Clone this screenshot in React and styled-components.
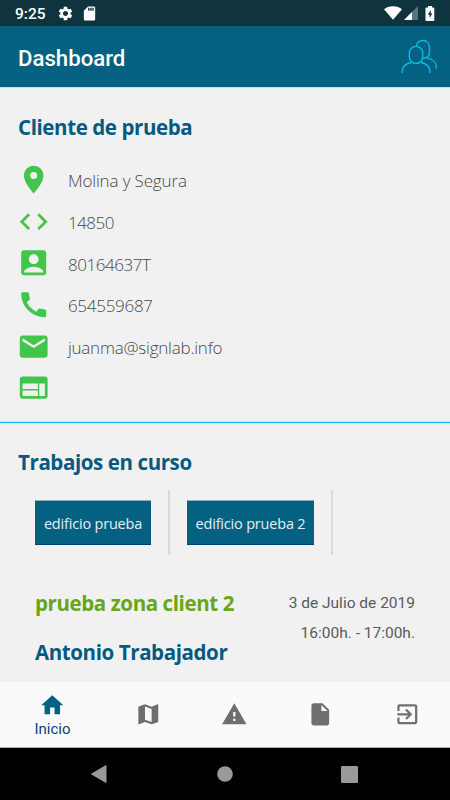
import React from "react";
import styled, { createGlobalStyle } from "styled-components";
import {
  MdSettings,
  MdSdCard,
  MdPlace,
  MdCode,
  MdAccountBox,
  MdCall,
  MdEmail,
  MdWeb,
  MdHome,
  MdMap,
  MdWarning,
  MdInsertDriveFile,
  MdExitToApp,
} from "react-icons/md";

const GlobalStyle = createGlobalStyle`
  :root {
    --clr-primary: #056182;
    --clr-title: #045a80;
    --clr-accent: #04bcee;
    --clr-green: #42c54b;
    --clr-bg: #f1f1f1;
  }
  * {
    box-sizing: border-box;
  }
  body {
    margin: 0;
    font-family: "Open Sans", "Noto Sans", sans-serif;
  }
  h1, h2, h3, p, ul {
    margin: 0;
    padding: 0;
  }
  svg {
    display: block;
    flex: none;
  }
`;

const Screen = styled.div`
  display: flex;
  flex-direction: column;
  width: 450px;
  height: 800px;
  overflow: hidden;
  background: var(--clr-bg);
`;

const StatusBar = styled.div`
  display: flex;
  align-items: center;
  justify-content: space-between;
  flex: none;
  height: 26px;
  padding: 0 15px;
  background: #10343f;
  color: #fff;
  font: 500 15.5px/26px Roboto, sans-serif;
`;

const StatusGroup = styled.div`
  display: flex;
  align-items: center;
  gap: ${(p) => p.$gap}px;
`;

const Time = styled.span`
  margin-right: 4px;
  padding-top: 1px;
`;

const AppBar = styled.header`
  display: flex;
  align-items: center;
  justify-content: space-between;
  flex: none;
  height: 62px;
  padding: 0 13px 0 18px;
  background: var(--clr-primary);
  border-bottom: 1px solid #d5dcdf;
  h1 {
    color: #fff;
    font: 500 22.2px/30px Roboto, sans-serif;
    padding-top: 3px;
  }
`;

const Content = styled.main`
  flex: 1;
  min-height: 0;
  overflow: hidden;
`;

const Client = styled.section`
  height: 335px;
  padding: 26px 18px 0;
  border-bottom: 1px solid var(--clr-accent);
  box-shadow: inset 0 -1px 0 #dfe3e4;
`;

const Title = styled.h2`
  color: ${(p) => p.$color || "var(--clr-title)"};
  font-size: 20.5px;
  font-weight: 700;
  line-height: 26px;
  letter-spacing: ${(p) => p.$spacing}px;
  white-space: nowrap;
`;

const InfoList = styled.ul`
  margin-top: 19px;
  list-style: none;
`;

const InfoRow = styled.li`
  display: flex;
  align-items: center;
  gap: 17.3px;
  height: 41.67px;
  margin-left: -0.8px;
  color: var(--clr-green);
  span {
    padding-top: 3px;
    color: #484848;
    font-size: 17px;
    font-weight: 300;
    line-height: 24px;
    letter-spacing: ${(p) => p.$spacing || 0}px;
  }
`;

const Jobs = styled.section`
  padding: 26px 18px 0;
`;

const Buildings = styled.div`
  display: flex;
  margin-top: 15px;
`;

const BuildingItem = styled.div`
  display: flex;
  align-items: center;
  height: 65px;
  padding: 0 17px;
  border-right: 2px solid #dadada;
`;

const BuildingButton = styled.button`
  width: ${(p) => p.$width}px;
  height: 45px;
  padding: 3px 0 0;
  border: 0;
  border-top: 1px solid #8aa9b5;
  border-bottom: 1px solid #003f70;
  background: var(--clr-primary);
  color: #e4eff3;
  font: 400 14.5px/20px "Open Sans", sans-serif;
  letter-spacing: -0.19px;
  white-space: nowrap;
`;

const Job = styled.article`
  display: flex;
  justify-content: space-between;
  padding: 35px 17px 0 17px;
`;

const JobInfo = styled.div`
  display: flex;
  flex-direction: column;
  gap: 23px;
`;

const JobDate = styled.div`
  margin-top: -2px;
  color: #5a5a5a;
  text-align: right;
  font: 400 15.5px/30px Roboto, sans-serif;
`;

const TabBar = styled.nav`
  display: grid;
  grid-template-columns: 105px 86px 86px 87px 86px;
  flex: none;
  height: 66px;
  background: #fafafa;
  border-bottom: 1px solid #a5a5a5;
`;

const Tab = styled.a`
  display: flex;
  flex-direction: column;
  align-items: center;
  padding-top: ${(p) => (p.$active ? 10 : 19)}px;
  color: ${(p) => (p.$active ? "var(--clr-primary)" : "#6f6f6f")};
  span {
    color: #0b3f80;
    font: 400 15px/20px Roboto, sans-serif;
  }
`;

const SystemBar = styled.div`
  display: flex;
  align-items: center;
  justify-content: space-between;
  flex: none;
  height: 52px;
  padding: 0 92px 0 90px;
  background: #000;
`;

const ClientsIcon = () => (
  <svg width="36" height="36" viewBox="0 0 36 36" fill="none" stroke="#06bfe8" strokeWidth="1.35">
    <rect x="8.3" y="7.3" width="13.5" height="17.2" rx="6.75" />
    <path d="M1.3 34v-1.200c0-5 3.600-8.300 9-9.300" />
    <path d="M28.900 34v-1.200c0-5-3.600-8.300-9-9.300" />
    <path d="M15.2 7.1C16.2 3.4 18.7 1.5 21.8 1.5c4 0 6.700 2.800 6.700 6.700v4.900c0 4.100-2.600 6.300-6.400 6.300" />
    <path d="M26.200 19.200c5.500.7 9.100 4.200 9.100 8.900v1.600" />
  </svg>
);

const WifiIcon = () => (
  <svg width="18" height="14" viewBox="0 0 18 14" fill="#fff">
    <path d="M0 3.2C2.4 1.2 5.5.2 9 .2s6.600 1 9 3L9 13.800z" />
  </svg>
);

const SignalIcon = () => (
  <svg width="14" height="14" viewBox="0 0 14 14">
    <path d="M14 0v14H0z" fill="#5a747c" />
    <path d="M8 6v8H0z" fill="#fff" />
  </svg>
);

const BatteryWrap = styled.div`
  margin-left: 5px;
`;

const BatteryIcon = () => (
  <BatteryWrap>
    <svg width="10" height="15" viewBox="0 0 10 15">
      <path
        d="M3 0h4v1.600h1.300c.6 0 1 .4 1 1V14c0 .6-.4 1-1 1H1.500c-.6 0-1-.4-1-1V2.600c0-.6.4-1 1-1H3z"
        fill="#fff"
      />
      <path d="M5.800 4L2.800 8.800h1.800V12l2.800-4.600H5.800z" fill="#10343f" />
    </svg>
  </BatteryWrap>
);

const clientInfo = [
  { icon: MdPlace, text: "Molina y Segura", spacing: -0.15 },
  { icon: MdCode, text: "14850", spacing: -0.5 },
  { icon: MdAccountBox, text: "80164637T", spacing: -0.45 },
  { icon: MdCall, text: "654559687", spacing: -0.27 },
  { icon: MdEmail, text: "juanma@signlab.info", spacing: -0.22 },
  { icon: MdWeb, text: "" },
];

const tabs = [
  { icon: MdHome, label: "Inicio", active: true },
  { icon: MdMap },
  { icon: MdWarning },
  { icon: MdInsertDriveFile },
  { icon: MdExitToApp },
];

export default function App() {
  return (
    <Screen>
      <GlobalStyle />
      <StatusBar>
        <StatusGroup $gap={7}>
          <Time>9:25</Time>
          <MdSettings size={17} />
          <MdSdCard size={17} />
        </StatusGroup>
        <StatusGroup $gap={2}>
          <WifiIcon />
          <SignalIcon />
          <BatteryIcon />
        </StatusGroup>
      </StatusBar>
      <AppBar>
        <h1>Dashboard</h1>
        <ClientsIcon />
      </AppBar>
      <Content>
        <Client>
          <Title $spacing={-0.4}>Cliente de prueba</Title>
          <InfoList>
            {clientInfo.map(({ icon: Icon, text, spacing }, i) => (
              <InfoRow key={i} $spacing={spacing}>
                <Icon size={33.4} />
                {text && <span>{text}</span>}
              </InfoRow>
            ))}
          </InfoList>
        </Client>
        <Jobs>
          <Title $spacing={-0.4}>Trabajos en curso</Title>
          <Buildings>
            <BuildingItem>
              <BuildingButton $width={116}>edificio prueba</BuildingButton>
            </BuildingItem>
            <BuildingItem>
              <BuildingButton $width={127}>edificio prueba 2</BuildingButton>
            </BuildingItem>
          </Buildings>
          <Job>
            <JobInfo>
              <Title as="h3" $color="#68a616" $spacing={-0.4}>
                prueba zona client 2
              </Title>
              <Title as="h3" $spacing={-0.4}>
                Antonio Trabajador
              </Title>
            </JobInfo>
            <JobDate>
              <p>3 de Julio de 2019</p>
              <p>16:00h. - 17:00h.</p>
            </JobDate>
          </Job>
        </Jobs>
      </Content>
      <TabBar>
        {tabs.map(({ icon: Icon, label, active }, i) => (
          <Tab key={i} $active={active}>
            <Icon size={26.6} />
            {label && <span>{label}</span>}
          </Tab>
        ))}
      </TabBar>
      <SystemBar>
        <svg width="18" height="20" viewBox="0 0 18 20" fill="#999">
          <path d="M16 1.500v17L1.500 10z" stroke="#999" strokeLinejoin="round" />
        </svg>
        <svg width="16" height="16" viewBox="0 0 16 16" fill="#999">
          <circle cx="8" cy="8" r="7.800" />
        </svg>
        <svg width="17" height="17" viewBox="0 0 17 17" fill="#999">
          <rect width="17" height="17" rx="1.200" />
        </svg>
      </SystemBar>
    </Screen>
  );
}
